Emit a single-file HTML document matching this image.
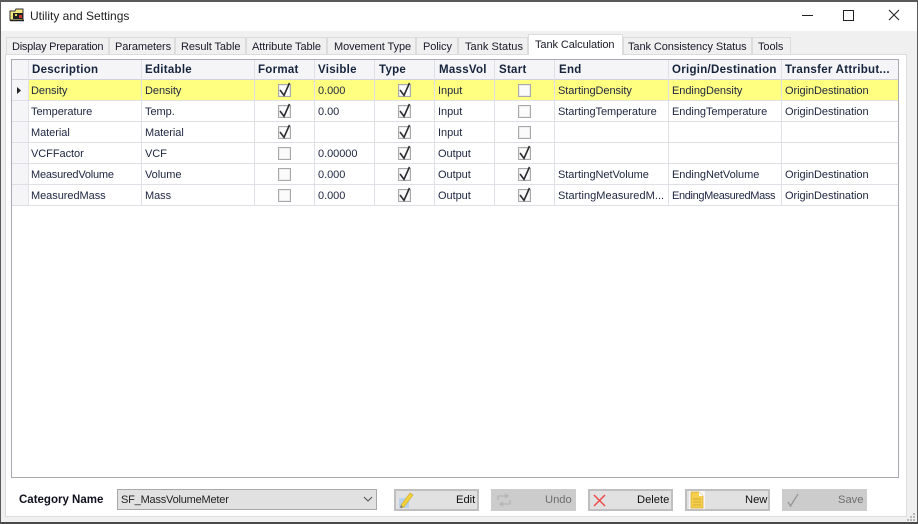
<!DOCTYPE html>
<html><head><meta charset="utf-8"><style>
html,body{margin:0;padding:0;background:#f0f0f0}
#w{position:relative;width:918px;height:524px;overflow:hidden;background:#f0f0f0;font:11px "Liberation Sans",sans-serif;color:#1a1a2a}
#w div,#w span,#w svg{position:absolute}
.t{white-space:nowrap;line-height:14px;letter-spacing:-.08px}
.tab{top:37px;height:17px;background:#f0f0f0;border:1px solid #dcdcdc;border-bottom:none;box-sizing:border-box}
.h{top:63px;font:bold 11.5px "Liberation Sans",sans-serif;letter-spacing:.28px;color:#15233b;white-space:nowrap;line-height:14px}
.c{white-space:nowrap;line-height:14px;font-size:11px;letter-spacing:-.05px;color:#1d2540}
.v{top:60px;width:1px;height:146px;background:#dfdfe6}
.r{left:12px;width:886px;height:1px;background:#dfdfe6}
.btn{top:489px;width:85px;height:22px;box-sizing:border-box;background:#e1e1e1;border:2px solid #bfbfbf}
.dis{background:#cccccc;border-color:#cccccc}
.bt{top:493px;line-height:14px;font-size:11.2px;color:#111;white-space:nowrap}
</style></head><body><div id="w">
<div style="left:0;top:0;width:918px;height:2px;background:#5a5a5a"></div>
<div style="left:0;top:0;width:1px;height:524px;background:#5a5a5a"></div>
<div style="left:917px;top:0;width:1px;height:524px;background:#5a5a5a"></div>
<div style="left:0;top:522px;width:918px;height:2px;background:#4a4a4a"></div>
<div style="left:1px;top:2px;width:916px;height:29px;background:#fff"></div>

<svg style="left:9px;top:8px" width="16" height="14" viewBox="0 0 16 14"><path d="M1 3h5l1-2h7v11H1z" fill="#f3e67c" stroke="#333" stroke-width="1"/><rect x="4" y="5" width="10" height="6" fill="#222"/><rect x="6" y="6" width="2" height="2" fill="#e8d850"/><rect x="10" y="7" width="3" height="3" fill="#c33"/><path d="M1 12.500h14" stroke="#222" stroke-width="1.500"/></svg>
<div class="t" style="left:30px;top:9px;font-size:12px;color:#222;letter-spacing:0">Utility and Settings</div>

<div style="left:802px;top:15px;width:11px;height:1px;background:#222"></div>
<div style="left:843px;top:10px;width:9px;height:9px;border:1px solid #222"></div>
<svg style="left:888px;top:9px" width="12" height="12" viewBox="0 0 12 12"><path d="M1 1l10 10M11 1L1 11" stroke="#222" stroke-width="1.100" fill="none"/></svg>

<div style="left:5px;top:54px;width:902px;height:463px;background:#fff;border:1px solid #dcdcdc;box-sizing:border-box"></div>

<div class="tab" style="left:6px;width:103px"></div><div class="t" style="left:12px;top:40px;letter-spacing:-.25px">Display Preparation</div>
<div class="tab" style="left:109px;width:66px"></div><div class="t" style="left:115px;top:40px">Parameters</div>
<div class="tab" style="left:175px;width:71px"></div><div class="t" style="left:181px;top:40px">Result Table</div>
<div class="tab" style="left:246px;width:81px"></div><div class="t" style="left:252px;top:40px">Attribute Table</div>
<div class="tab" style="left:327px;width:89px"></div><div class="t" style="left:334px;top:40px">Movement Type</div>
<div class="tab" style="left:416px;width:42px"></div><div class="t" style="left:423px;top:40px">Policy</div>
<div class="tab" style="left:458px;width:70px"></div><div class="t" style="left:465px;top:40px;letter-spacing:.05px">Tank Status</div>
<div class="tab" style="left:623px;width:129px"></div><div class="t" style="left:628px;top:40px">Tank Consistency Status</div>
<div class="tab" style="left:752px;width:39px"></div><div class="t" style="left:758px;top:40px">Tools</div>
<div style="left:528px;top:34px;width:95px;height:21px;background:#fff;border:1px solid #dcdcdc;border-bottom:none;box-sizing:border-box"></div><div class="t" style="left:535px;top:38px">Tank Calculation</div>

<div style="left:11px;top:59px;width:888px;height:419px;border:1px solid #a9a9b4;box-sizing:border-box;background:#fff"></div>
<div style="left:12px;top:60px;width:886px;height:20px;background:#f5f5f8"></div>
<div style="left:12px;top:60px;width:16px;height:146px;background:#f5f5f8"></div>
<div style="left:28px;top:80px;width:870px;height:20px;background:#ffff80"></div>

<div class="r" style="top:79px;background:#d2d2da"></div>
<div class="r" style="top:100px"></div><div class="r" style="top:121px"></div><div class="r" style="top:142px"></div><div class="r" style="top:163px"></div><div class="r" style="top:184px"></div><div class="r" style="top:205px"></div>
<div class="v" style="left:28px"></div><div class="v" style="left:141px"></div><div class="v" style="left:254px"></div><div class="v" style="left:314px"></div><div class="v" style="left:374px"></div><div class="v" style="left:434px"></div><div class="v" style="left:494px"></div><div class="v" style="left:554px"></div><div class="v" style="left:668px"></div><div class="v" style="left:781px"></div>

<div class="h" style="left:32px">Description</div><div class="h" style="left:145px">Editable</div><div class="h" style="left:258px">Format</div><div class="h" style="left:318px">Visible</div><div class="h" style="left:379px">Type</div><div class="h" style="left:439px">MassVol</div><div class="h" style="left:499px">Start</div><div class="h" style="left:559px">End</div><div class="h" style="left:672px">Origin/Destination</div><div class="h" style="left:785px">Transfer Attribut...</div>

<svg style="left:17px;top:87px" width="5" height="7"><path d="M0 0l4 3.500L0 7z" fill="#222"/></svg>

<div class="c" style="left:31px;top:84px">Density</div><div class="c" style="left:145px;top:84px">Density</div><div class="c" style="left:318px;top:84px">0.000</div><div class="c" style="left:438px;top:84px">Input</div><div class="c" style="left:558px;top:84px">StartingDensity</div><div class="c" style="left:672px;top:84px">EndingDensity</div><div class="c" style="left:785px;top:84px">OriginDestination</div>
<div class="c" style="left:31px;top:105px">Temperature</div><div class="c" style="left:145px;top:105px">Temp.</div><div class="c" style="left:318px;top:105px">0.00</div><div class="c" style="left:438px;top:105px">Input</div><div class="c" style="left:558px;top:105px">StartingTemperature</div><div class="c" style="left:672px;top:105px">EndingTemperature</div><div class="c" style="left:785px;top:105px">OriginDestination</div>
<div class="c" style="left:31px;top:126px">Material</div><div class="c" style="left:145px;top:126px">Material</div><div class="c" style="left:438px;top:126px">Input</div>
<div class="c" style="left:31px;top:147px">VCFFactor</div><div class="c" style="left:145px;top:147px">VCF</div><div class="c" style="left:318px;top:147px">0.00000</div><div class="c" style="left:438px;top:147px">Output</div>
<div class="c" style="left:31px;top:168px;letter-spacing:-.2px">MeasuredVolume</div><div class="c" style="left:145px;top:168px">Volume</div><div class="c" style="left:318px;top:168px">0.000</div><div class="c" style="left:438px;top:168px">Output</div><div class="c" style="left:558px;top:168px">StartingNetVolume</div><div class="c" style="left:672px;top:168px">EndingNetVolume</div><div class="c" style="left:785px;top:168px">OriginDestination</div>
<div class="c" style="left:31px;top:189px">MeasuredMass</div><div class="c" style="left:145px;top:189px">Mass</div><div class="c" style="left:318px;top:189px">0.000</div><div class="c" style="left:438px;top:189px">Output</div><div class="c" style="left:558px;top:189px;letter-spacing:.05px">StartingMeasuredM...</div><div class="c" style="left:672px;top:189px;letter-spacing:-.35px">EndingMeasuredMass</div><div class="c" style="left:785px;top:189px">OriginDestination</div>

<svg style="left:0;top:0;overflow:visible" width="918" height="524">
<defs>
<g id="b"><rect x=".5" y="1.500" width="12" height="12" fill="#ececec" stroke="#a9a9a9"/><rect x="2" y="3" width="9" height="9" fill="#fbfbfb"/></g>
<g id="k"><use href="#b"/><path d="M2 7l4 5.300L11.500 0" fill="none" stroke="#2a2a30" stroke-width="1.600"/></g>
</defs>
<use href="#k" x="278" y="83"/><use href="#k" x="398" y="83"/><use href="#b" x="518" y="83"/>
<use href="#k" x="278" y="104"/><use href="#k" x="398" y="104"/><use href="#b" x="518" y="104"/>
<use href="#k" x="278" y="125"/><use href="#k" x="398" y="125"/><use href="#b" x="518" y="125"/>
<use href="#b" x="278" y="146"/><use href="#k" x="398" y="146"/><use href="#k" x="518" y="146"/>
<use href="#b" x="278" y="167"/><use href="#k" x="398" y="167"/><use href="#k" x="518" y="167"/>
<use href="#b" x="278" y="188"/><use href="#k" x="398" y="188"/><use href="#k" x="518" y="188"/>
</svg>

<div class="t" style="left:19px;top:493px;font-weight:bold;font-size:11.5px;letter-spacing:0;color:#101020">Category Name</div>
<div style="left:117px;top:489px;width:260px;height:21px;box-sizing:border-box;background:#e1e1e1;border:1px solid #a8a8a8"></div>
<div class="t" style="left:121px;top:493px;font-size:11px;letter-spacing:-.2px;color:#222">SF_MassVolumeMeter</div>
<svg style="left:363px;top:496px" width="10" height="6"><path d="M1 1l4 4 4-4" fill="none" stroke="#555" stroke-width="1.100"/></svg>

<div class="btn" style="left:394px"></div>
<svg style="left:397px;top:491px" width="18" height="18" viewBox="0 0 18 18"><path d="M2 7h10v10H2z" fill="#b9d2ee"/><path d="M4 14L13 2l3 2-9 12-3 1z" fill="#f2d23a" stroke="#c9a52a" stroke-width=".6"/><path d="M4 14l-1 3 3-1z" fill="#777"/></svg>
<div class="bt" style="left:456px">Edit</div>

<div class="btn dis" style="left:491px"></div>
<svg style="left:495px;top:492px" width="18" height="17" viewBox="0 0 18 17"><path d="M3 8V4h9M10 2l3 2-3 2M15 8v4H6M8 10l-3 2 3 2" fill="none" stroke="#b5b5b5" stroke-width="1.300"/></svg>
<div class="bt" style="left:545px;color:#6e6e6e">Undo</div>

<div class="btn" style="left:588px"></div>
<svg style="left:593px;top:494px" width="13" height="13" viewBox="0 0 13 13"><path d="M1 1l11 11M12 1L1 12" stroke="#ee4a4a" stroke-width="1.500" fill="none"/></svg>
<div class="bt" style="left:637px">Delete</div>

<div class="btn" style="left:685px"></div>
<svg style="left:689px;top:491px" width="16" height="18" viewBox="0 0 16 18"><rect x="0" y="0" width="16" height="18" fill="#f6f6f6"/><path d="M2 1h8l4 4v12H2z" fill="#f5cf4e" stroke="#d9a92e" stroke-width=".7"/><path d="M10 1v4h4z" fill="#fff"/><path d="M4 8h8M4 11h8M4 14h8" stroke="#c99d2a" stroke-width=".8"/></svg>
<div class="bt" style="left:745px">New</div>

<div class="btn dis" style="left:782px"></div>
<svg style="left:786px;top:492px" width="15" height="16" viewBox="0 0 15 16"><path d="M2 10l2.500 4L12 2" fill="none" stroke="#9a9a9a" stroke-width="1.400"/></svg>
<div class="bt" style="left:838px;color:#6e6e6e">Save</div>

<svg style="left:906px;top:512px" width="11" height="10"><g fill="#b8b8b8"><rect x="7" y="1" width="2" height="2"/><rect x="4" y="4" width="2" height="2"/><rect x="7" y="4" width="2" height="2"/><rect x="1" y="7" width="2" height="2"/><rect x="4" y="7" width="2" height="2"/><rect x="7" y="7" width="2" height="2"/></g></svg>
</div></body></html>
